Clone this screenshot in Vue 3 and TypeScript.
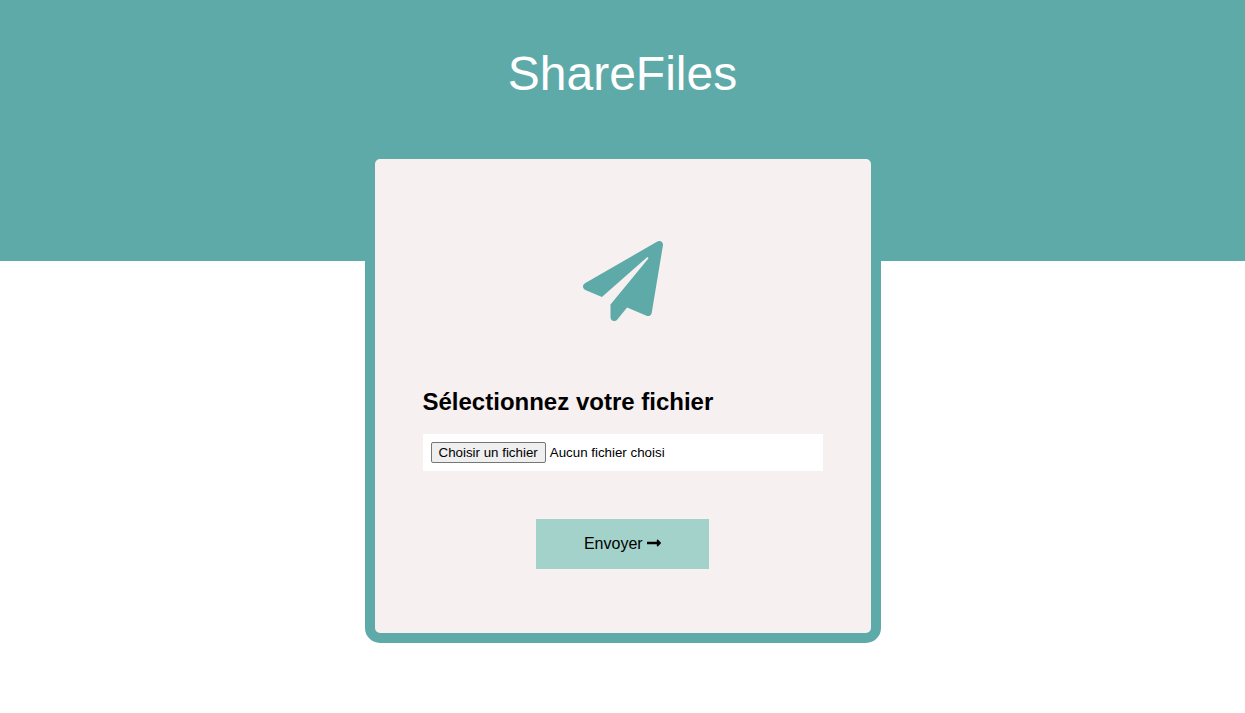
<script setup lang="ts">
import { ref } from 'vue'

const fileInput = ref<HTMLInputElement | null>(null)
const fileName = ref<string>('Aucun fichier choisi')

function openPicker(): void {
  fileInput.value?.click()
}

function onChange(event: Event): void {
  const files = (event.target as HTMLInputElement).files
  fileName.value = files && files.length > 0 ? files[0].name : 'Aucun fichier choisi'
}
</script>

<template>
  <div class="page">
    <header class="banner">
      <h1 class="title">ShareFiles</h1>
    </header>
    <main class="main">
      <form class="card" @submit.prevent>
        <svg class="plane" viewBox="0 0 512 512" aria-hidden="true">
          <path
            fill="currentColor"
            d="M476 3.2L12.5 270.6c-18.1 10.4-15.8 35.6 2.2 43.2L121 358.4l287.3-253.2c5.5-4.9 13.3 2.6 8.6 8.3L176 407v80.5c0 23.6 28.5 32.9 42.5 15.8L282 426l124.6 52.2c14.2 6 30.4-2.9 33-18.2l72-432C515 7.8 493.3-6.8 476 3.2z"
          />
        </svg>
        <h2 class="heading"><label for="file">Sélectionnez votre fichier</label></h2>
        <div class="field">
          <input id="file" ref="fileInput" class="native" type="file" tabindex="-1" @change="onChange" />
          <button class="choose" type="button" @click="openPicker">Choisir un fichier</button>
          <output class="name" for="file">{{ fileName }}</output>
        </div>
        <button class="send" type="submit">
          Envoyer <svg class="arrow" viewBox="0 0 448 512" aria-hidden="true">
            <path
              fill="currentColor"
              d="M313.941 216H12c-6.627 0-12 5.373-12 12v56c0 6.627 5.373 12 12 12h301.941v46.059c0 21.382 25.851 32.09 40.971 16.971l86.059-86.059c9.373-9.373 9.373-24.569 0-33.941l-86.059-86.059c-15.119-15.119-40.971-4.411-40.971 16.971V216z"
            />
          </svg>
        </button>
      </form>
    </main>
  </div>
</template>

<style>
body {
  margin: 0;
  background: #ffffff;
}
</style>

<style scoped>
.page {
  font-family: "Liberation Sans", Arial, sans-serif;
  font-size: 16px;
  color: #000000;
}

.banner {
  box-sizing: border-box;
  height: 261px;
  padding-top: 46px;
  background: #5eaaa8;
}

.title {
  margin: 0;
  font-size: 48px;
  font-weight: 400;
  line-height: 56px;
  text-align: center;
  color: #ffffff;
}

.main {
  display: flex;
  justify-content: center;
  margin-top: -112px;
}

.card {
  display: flex;
  flex-direction: column;
  align-items: center;
  box-sizing: border-box;
  width: 100%;
  max-width: 516px;
  padding: 82px 48px 64px;
  border: 10px solid #5eaaa8;
  border-radius: 15px;
  background: #f7f0f0;
}

.plane {
  width: 80px;
  height: 80px;
  color: #5eaaa8;
}

.heading {
  align-self: stretch;
  margin: 67px 0 18px;
  font-size: 24px;
  font-weight: 700;
  line-height: 28px;
}

.field {
  position: relative;
  display: flex;
  align-items: center;
  gap: 4px;
  align-self: stretch;
  padding: 8px;
  background: #ffffff;
  font-size: smaller;
}

.native {
  position: absolute;
  width: 1px;
  height: 1px;
  opacity: 0;
  overflow: hidden;
  pointer-events: none;
}

.choose {
  box-sizing: border-box;
  height: 21px;
  padding: 0 7px;
  border: 1px solid #767676;
  border-radius: 2px;
  background: #efefef;
  color: #000000;
  font: inherit;
  white-space: nowrap;
}

.send {
  margin-top: 48px;
  padding: 16px 48px;
  border: 0;
  background: #a3d2ca;
  color: #000000;
  font: inherit;
  line-height: 18px;
  white-space: nowrap;
  cursor: pointer;
}

.arrow {
  width: 14px;
  height: 16px;
  vertical-align: -2px;
}
</style>
